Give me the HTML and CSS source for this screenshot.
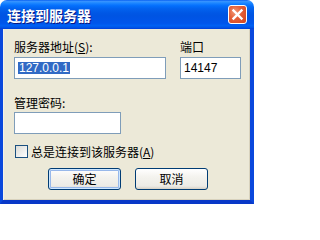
FILE: index.html
```html
<!DOCTYPE html>
<html lang="zh-CN">
<head>
<meta charset="utf-8">
<title>连接到服务器</title>
<link rel="stylesheet" href="styles.css">
</head>
<body>
<div class="window">
  <div class="titlebar">
    <span class="title">连接到服务器</span>
    <span class="close"><svg width="17" height="17" viewBox="0 0 17 17"><path d="M4.5 4.5 L12.5 12.5 M12.5 4.5 L4.5 12.5" stroke="#fff" stroke-width="2.4" stroke-linecap="square" fill="none"/></svg></span>
  </div>
  <div class="client">
    <div class="row-top">
      <div class="field host">
        <label class="lbl">服务器地址(<u>S</u>):</label>
        <div class="input"><span class="sel">127.0.0.1</span></div>
      </div>
      <div class="field port">
        <label class="lbl">端口</label>
        <div class="input">14147</div>
      </div>
    </div>
    <div class="field pwd">
      <label class="lbl">管理密码:</label>
      <div class="input"></div>
    </div>
    <div class="check">
      <span class="box"></span>
      <span class="lbl">总是连接到该服务器(<u>A</u>)</span>
    </div>
    <div class="buttons">
      <button class="btn default">确定</button>
      <button class="btn">取消</button>
    </div>
  </div>
</div>
</body>
</html>
```

FILE: styles.css
```css
html, body {
  margin: 0;
  padding: 0;
  background: #ffffff;
}
body {
  width: 254px;
  height: 204px;
  overflow: hidden;
  font-family: "Liberation Sans", "Noto Sans CJK SC", sans-serif;
  font-size: 12px;
  color: #000;
}
.window {
  width: 254px;
  height: 204px;
  box-sizing: border-box;
  display: flex;
  flex-direction: column;
}
.titlebar {
  height: 29px;
  flex: none;
  border-radius: 7px 7px 0 0;
  background: linear-gradient(to bottom, #0058ee 0%, #3a93ff 4%, #288eff 8%, #127dff 14%, #036ffc 20%, #0262ee 30%, #0057e5 45%, #0054e3 55%, #0055eb 80%, #0060f3 88%, #0057e9 94%, #003dd7 100%);
  display: flex;
  align-items: center;
  justify-content: space-between;
  padding: 0 7px 0 7px;
}
.title {
  color: #fff;
  font-family: "Noto Sans CJK SC", sans-serif;
  font-weight: bold;
  font-size: 14px;
  line-height: 16px;
  margin-top: 1px;
  text-shadow: 1px 1px 0 #0a1883;
}
.close {
  width: 19px;
  height: 19px;
  box-sizing: border-box;
  border: 1px solid #fff;
  border-radius: 3px;
  background: radial-gradient(circle at 35% 35%, #f29a78 0%, #e5613a 40%, #d2431c 100%);
  display: flex;
  align-items: center;
  justify-content: center;
}
.close svg {
  display: block;
  width: 17px;
  height: 17px;
}
.client {
  flex: 1;
  background: #ece9d8;
  border-left: 3px solid #0a48dc;
  border-right: 4px solid #0a48dc;
  border-bottom: 4px solid #0838c8;
  box-shadow: inset 1px 0 0 #f4f2e8, inset -1px -1px 0 #d8d2bd;
  padding: 11px 0 0 11px;
  display: flex;
  flex-direction: column;
}
.lbl {
  display: block;
  font-family: "Noto Sans CJK SC", sans-serif;
  font-size: 12px;
  line-height: 14px;
  height: 14px;
  white-space: nowrap;
}
.row-top {
  display: flex;
  gap: 14px;
}
.field {
  display: flex;
  flex-direction: column;
  gap: 3px;
}
.input {
  height: 22px;
  box-sizing: border-box;
  border: 1px solid #7f9db9;
  background: #fff;
  font-family: "Liberation Sans", sans-serif;
  font-size: 12px;
  line-height: 20px;
  padding-left: 3px;
  display: flex;
  align-items: center;
}
.host .input { width: 152px; }
.port .input { width: 61px; }
.pwd { margin-top: 17px; gap: 2px; }
.pwd .input { width: 107px; }
.sel {
  background: #316ac5;
  color: #fff;
  line-height: 12px;
  padding: 0 1px;
}
.check {
  display: flex;
  align-items: center;
  margin-top: 11px;
  height: 13px;
  gap: 3px;
  padding-left: 1px;
}
.box {
  width: 13px;
  height: 13px;
  box-sizing: border-box;
  border: 1px solid #1c5180;
  background: linear-gradient(135deg, #dcdcd7 0%, #ffffff 100%);
  flex: none;
}
.buttons {
  display: flex;
  gap: 14px;
  margin-top: 10px;
  padding-left: 34px;
}
.btn {
  width: 73px;
  height: 22px;
  box-sizing: border-box;
  border: 1px solid #003c74;
  border-radius: 3px;
  background: linear-gradient(to bottom, #ffffff 0%, #f4f3ee 40%, #ecebe6 85%, #d6d0c5 100%);
  font-family: "Noto Sans CJK SC", sans-serif;
  font-size: 12px;
  line-height: 18px;
  color: #000;
  padding: 0;
  margin: 0;
}
.btn.default {
  box-shadow: inset 0 0 0 1px #cee7ff, inset 0 0 0 2px #98b8ea;
}
```
